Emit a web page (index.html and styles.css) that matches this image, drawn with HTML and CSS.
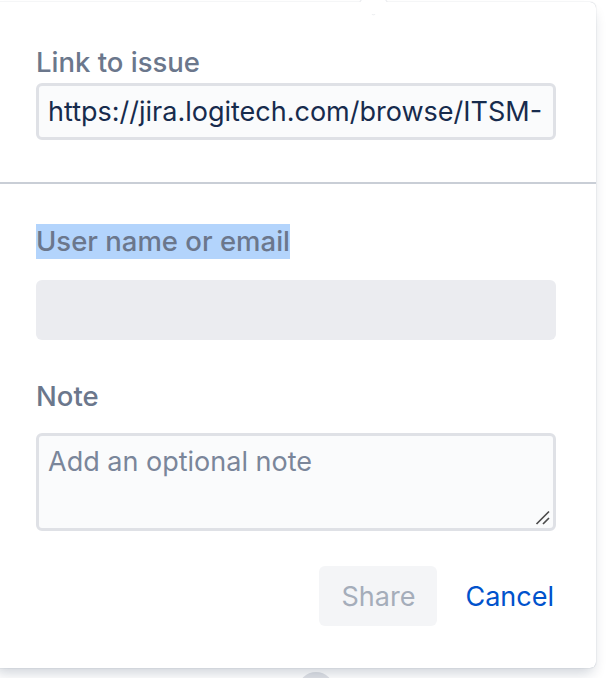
FILE: index.html
```html
<!DOCTYPE html>
<html lang="en">
<head>
<meta charset="utf-8">
<title>Share issue</title>
<link rel="stylesheet" href="styles.css">
</head>
<body>
<div class="page">
  <div class="card">
    <section class="section first">
      <label class="label">Link to issue</label>
      <div class="field link-field">https://jira.logitech.com/browse/ITSM-</div>
    </section>
    <div class="divider"></div>
    <section class="section second">
      <label class="label"><span class="selected">User name or email</span></label>
      <div class="field picker"></div>
      <label class="label note-label">Note</label>
      <div class="textarea">
        <span class="placeholder">Add an optional note</span>
        <svg class="resizer" width="15" height="15" viewBox="0 0 15 15">
          <path d="M1.5 14 L14 1.5 M8 14 L14 8" stroke="#4d4d4d" stroke-width="1.7" fill="none"/>
        </svg>
      </div>
      <div class="actions">
        <button class="btn share">Share</button>
        <button class="btn cancel">Cancel</button>
      </div>
    </section>
  </div>
  <div class="behind">
    <span class="avatar"></span>
    <span class="behind-text">added a comment</span>
  </div>
</div>
</body>
</html>
```
FILE: styles.css
```css
html, body {
  margin: 0;
  padding: 0;
  background: #ffffff;
  overflow: hidden;
}
body {
  font-family: Inter, "Noto Sans", "Liberation Sans", sans-serif;
  width: 608px;
  height: 678px;
}
.page {
  width: 608px;
  height: 678px;
  overflow: hidden;
}
.card {
  position: relative;
  margin-top: 2px;
  margin-left: -8px;
  width: 604px;
  height: 666px;
  box-sizing: border-box;
  background: #ffffff;
  border-radius: 6px;
  box-shadow: 0 8px 14px -4px rgba(9, 30, 66, 0.22), 0 0 1px rgba(9, 30, 66, 0.35);
}
.card::before {
  content: "";
  position: absolute;
  left: 372px;
  top: -10px;
  width: 19px;
  height: 19px;
  background: #ffffff;
  transform: rotate(45deg);
  box-shadow: 0 0 1px rgba(9, 30, 66, 0.35);
}
.card::after {
  content: "";
  position: absolute;
  left: 360px;
  top: 0;
  width: 40px;
  height: 12px;
  background: #ffffff;
}
.section {
  position: relative;
  z-index: 1;
  display: flex;
  flex-direction: column;
  padding-left: 44px;
  padding-right: 40px;
}
.section.first {
  padding-top: 43px;
  padding-bottom: 42px;
}
.section.second {
  padding-top: 40px;
}
.label {
  font-size: 27.5px;
  line-height: 35px;
  font-weight: 500;
  color: #6b778c;
}
.selected {
  display: inline-block;
  background: #b3d4fc;
}
.field {
  box-sizing: border-box;
  border-radius: 6px;
}
.link-field {
  margin-top: 3px;
  height: 57px;
  border: 3px solid #dfe1e6;
  background: #fafbfc;
  padding: 0 9px;
  font-size: 27px;
  line-height: 51px;
  color: #172b4d;
  white-space: nowrap;
  overflow: hidden;
}
.divider {
  position: relative;
  z-index: 1;
  height: 2px;
  background: #c9ced6;
}
.picker {
  margin-top: 21px;
  height: 60px;
  background: #ebecf0;
}
.note-label {
  margin-top: 39px;
}
.textarea {
  position: relative;
  margin-top: 19px;
  box-sizing: border-box;
  height: 98px;
  border: 3px solid #dfe1e6;
  border-radius: 6px;
  background: #fafbfc;
  padding: 9px 9px 0;
  font-size: 27px;
  line-height: 34px;
}
.placeholder {
  color: #7a869a;
}
.resizer {
  position: absolute;
  right: 3px;
  bottom: 3px;
}
.actions {
  display: flex;
  justify-content: flex-end;
  align-items: center;
  margin-top: 35px;
  gap: 28px;
  padding-right: 2px;
}
.btn {
  font-family: inherit;
  font-size: 27px;
  border: none;
  border-radius: 6px;
  height: 60px;
  margin: 0;
  cursor: pointer;
}
.share {
  width: 118px;
  background: #f4f5f7;
  color: #a5adba;
  padding: 0;
}
.cancel {
  background: transparent;
  color: #0052cc;
  padding: 0;
}
.behind {
  display: flex;
  align-items: flex-start;
  gap: 12px;
  margin-top: 4px;
  padding-left: 298px;
}
.avatar {
  width: 36px;
  height: 36px;
  border-radius: 50%;
  background: #dfe1e6;
}
.behind-text {
  font-size: 28px;
  line-height: 34px;
  color: #0052cc;
  margin-top: 2px;
}
```
